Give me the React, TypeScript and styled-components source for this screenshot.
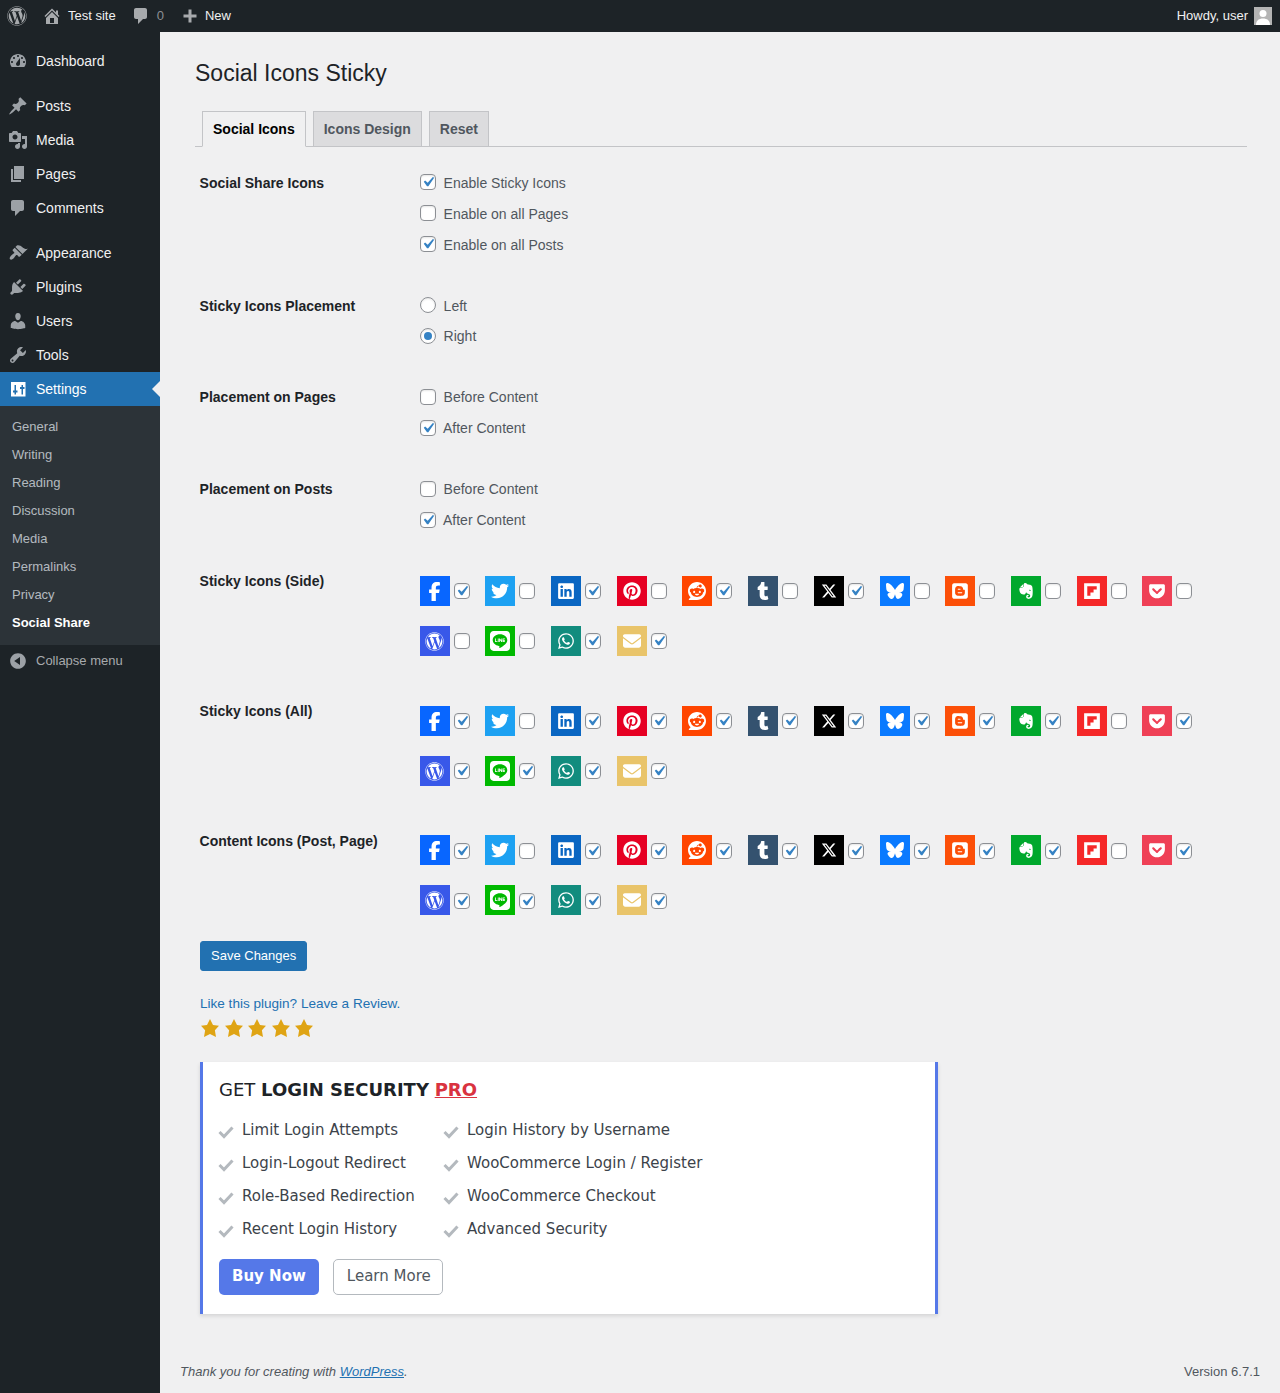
import React from "react";
import styled, { createGlobalStyle } from "styled-components";
import {
  FaBlogger,
  FaBluesky,
  FaEnvelope,
  FaEvernote,
  FaFacebookF,
  FaFlipboard,
  FaGetPocket,
  FaLine,
  FaLinkedin,
  FaPinterest,
  FaReddit,
  FaTumblr,
  FaTwitter,
  FaWhatsapp,
  FaWordpress,
  FaXTwitter,
} from "react-icons/fa6";

const GlobalStyle = createGlobalStyle`
  html, body {
    margin: 0;
    padding: 0;
    background: #f0f0f1;
    font-family: "Liberation Sans", Arial, sans-serif;
    font-size: 13px;
    color: #3c434a;
  }
`;

const Page = styled.div`
  display: flex;
  flex-direction: column;
  min-height: 100vh;
`;

/* admin bar */
const AdminBar = styled.header`
  display: flex;
  align-items: center;
  height: 32px;
  background: #1d2327;
  color: #f0f0f1;
`;
const BarItem = styled.div<{ $left: number; $gap?: number; $muted?: boolean }>`
  display: flex;
  align-items: center;
  gap: ${(p) => p.$gap ?? 8}px;
  margin-left: ${(p) => p.$left}px;
  color: ${(p) => (p.$muted ? "#8c8f94" : "#f0f0f1")};
  svg {
    color: #a7aaad;
  }
`;
const BarLabel = styled.span`
  margin-top: -2px;
`;
const BarRight = styled.div`
  display: flex;
  align-items: center;
  gap: 6px;
  margin-left: auto;
  margin-right: 8px;
`;
const Avatar = styled.svg`
  display: block;
  width: 18px;
  height: 18px;
`;

/* sidebar */
const Body = styled.div`
  display: flex;
  flex: 1;
`;
const Sidebar = styled.nav`
  width: 160px;
  flex-shrink: 0;
  background: #1d2327;
  padding-top: 12px;
`;
const MenuItem = styled.div<{ $active?: boolean; $gapAfter?: boolean }>`
  position: relative;
  display: flex;
  align-items: center;
  height: 34px;
  padding-left: 8px;
  gap: 8px;
  font-size: 14px;
  color: ${(p) => (p.$active ? "#fff" : "#f0f0f1")};
  background: ${(p) => (p.$active ? "#2271b1" : "transparent")};
  margin-bottom: ${(p) => (p.$gapAfter ? 11 : 0)}px;
  svg {
    color: ${(p) => (p.$active ? "#fff" : "#9ca1a6")};
  }
`;
const MenuArrow = styled.span`
  position: absolute;
  right: 0;
  top: 9px;
  border: 8px solid transparent;
  border-right-color: #f0f0f1;
  border-left-width: 0;
`;
const SubMenu = styled.div`
  background: #2c3338;
  padding: 6px 0 9px;
`;
const SubItem = styled.div<{ $current?: boolean }>`
  display: flex;
  align-items: center;
  height: 28px;
  padding-left: 12px;
  font-size: 13px;
  font-weight: ${(p) => (p.$current ? 700 : 400)};
  color: ${(p) => (p.$current ? "#fff" : "rgba(240, 246, 252, 0.7)")};
`;
const Collapse = styled.div`
  display: flex;
  align-items: center;
  gap: 8px;
  height: 32px;
  padding-left: 8px;
  font-size: 13px;
  color: #a7aaad;
  span {
    margin-top: -2px;
  }
  svg {
    color: #9ca1a6;
  }
`;

/* main column */
const Main = styled.main`
  flex: 1;
  display: flex;
  flex-direction: column;
`;
const Wrap = styled.div`
  padding: 27px 33px 0 35px;
`;
const Title = styled.h1`
  margin: 0 0 23px;
  font-size: 23px;
  font-weight: 400;
  line-height: 29px;
  color: #1d2327;
`;
const Tabs = styled.div`
  display: flex;
  gap: 7px;
  padding-left: 7px;
  border-bottom: 1px solid #c3c4c7;
`;
const Tab = styled.div<{ $active?: boolean }>`
  display: flex;
  align-items: center;
  height: 34px;
  padding: 0 10px;
  border: 1px solid #c3c4c7;
  border-bottom: ${(p) => (p.$active ? "1px solid #f0f0f1" : "none")};
  margin-bottom: ${(p) => (p.$active ? "-1px" : "0")};
  background: ${(p) => (p.$active ? "#f0f0f1" : "#dcdcde")};
  color: ${(p) => (p.$active ? "#000" : "#50575e")};
  font-size: 14px;
  font-weight: 700;
`;
const Form = styled.form`
  padding: 20px 0 0 5px;
  margin: 0;
`;
const Section = styled.section<{ $top?: number }>`
  display: grid;
  grid-template-columns: 220px 1fr;
  margin-top: ${(p) => p.$top ?? 0}px;
`;
const SectionLabel = styled.div<{ $offset: number }>`
  font-size: 14px;
  font-weight: 700;
  line-height: 20px;
  color: #1d2327;
  margin-top: ${(p) => p.$offset}px;
  margin-left: -0.4px;
`;
const Options = styled.div`
  display: flex;
  flex-direction: column;
  gap: 1px;
`;
const OptionRow = styled.label<{ $tight?: boolean }>`
  display: flex;
  align-items: center;
  gap: ${(p) => (p.$tight ? 7 : 7.6)}px;
  height: 30px;
  font-size: 14px;
  color: #50575e;
`;
const OptionText = styled.span<{ $nudge?: boolean }>`
  margin-top: ${(p) => (p.$nudge ? 2 : 0)}px;
`;
const Box = styled.span`
  display: block;
  box-sizing: border-box;
  width: 16px;
  height: 16px;
  flex-shrink: 0;
  background: #fff;
  border: 1px solid #8c8f94;
  border-radius: 4px;
  box-shadow: inset 0 1px 2px rgba(0, 0, 0, 0.1);
  svg {
    display: block;
    width: 20px;
    height: 20px;
    margin: -3px 0 0 -3px;
    color: #3582c4;
  }
`;
const Radio = styled.span<{ $on?: boolean }>`
  display: flex;
  align-items: center;
  justify-content: center;
  box-sizing: border-box;
  width: 16px;
  height: 16px;
  flex-shrink: 0;
  background: #fff;
  border: 1px solid #8c8f94;
  border-radius: 50%;
  box-shadow: inset 0 1px 2px rgba(0, 0, 0, 0.1);
  &::before {
    content: "";
    display: ${(p) => (p.$on ? "block" : "none")};
    width: 8px;
    height: 8px;
    border-radius: 50%;
    background: #3582c4;
  }
`;
const IconGrid = styled.div<{ $lowChecks?: boolean }>`
  display: grid;
  grid-template-columns: repeat(12, 65.72px);
  row-gap: 20px;
  margin-left: -0.45px;
  ${Box} {
    margin-top: ${(p) => (p.$lowChecks ? 2 : 0)}px;
  }
`;
const IconCell = styled.div`
  display: flex;
  align-items: center;
  gap: 4px;
`;
const Tile = styled.span<{ $bg: string }>`
  display: flex;
  align-items: center;
  justify-content: center;
  width: 30px;
  height: 30px;
  color: #fff;
  background: ${(p) => p.$bg};
`;
const SaveButton = styled.button`
  display: block;
  height: 30px;
  margin-top: 26px;
  padding: 0 10px 2px;
  border: 1px solid #2271b1;
  border-radius: 3px;
  background: #2271b1;
  color: #fff;
  font-family: inherit;
  font-size: 13px;
`;
const ReviewLink = styled.a`
  display: block;
  margin-top: 23px;
  font-size: 13.56px;
  line-height: 20px;
  color: #2271b1;
  text-decoration: none;
`;
const Stars = styled.div`
  display: flex;
  gap: 3.6px;
  margin-top: 4px;
  color: #dfa414;
  svg {
    display: block;
    width: 20px;
    height: 20px;
  }
`;

/* upsell card */
const Card = styled.div`
  box-sizing: border-box;
  width: 738px;
  height: 252px;
  margin-top: 24px;
  padding: 16px 16px 0;
  background: #fff;
  border-left: 3px solid #5578e8;
  border-right: 3px solid #5578e8;
  box-shadow: 0 2px 4px rgba(0, 0, 0, 0.12);
  font-family: "DejaVu Sans", sans-serif;
`;
const CardTitle = styled.h3`
  margin: 0 0 11px;
  font-size: 18px;
  font-weight: 400;
  line-height: 24px;
  color: #1d2327;
  b {
    font-weight: 700;
  }
  u {
    font-weight: 700;
    color: #d9333f;
  }
`;
const FeatureGrid = styled.div`
  display: grid;
  grid-template-columns: 225px 1fr;
  grid-auto-rows: 33px;
`;
const Feature = styled.div`
  display: flex;
  align-items: center;
  gap: 8px;
  margin-left: -1px;
  font-size: 15px;
  color: #3c434a;
  svg {
    width: 16px;
    height: 14px;
    margin-top: 5px;
    flex-shrink: 0;
  }
`;
const CardActions = styled.div`
  display: flex;
  gap: 14px;
  margin-top: 14px;
`;
const BuyButton = styled.a`
  display: flex;
  align-items: center;
  box-sizing: border-box;
  height: 36px;
  padding: 0 13px 2px;
  border-radius: 5px;
  background: #5578e8;
  color: #fff;
  font-size: 15px;
  font-weight: 700;
`;
const LearnButton = styled.a`
  display: flex;
  align-items: center;
  box-sizing: border-box;
  height: 36px;
  padding: 0 11px 2px 13px;
  border: 1px solid #b4b9be;
  border-radius: 5px;
  background: #fff;
  color: #50575e;
  font-size: 15px;
`;

const Footer = styled.footer`
  display: flex;
  justify-content: space-between;
  margin-top: auto;
  padding: 0 20px 11px;
  line-height: 20px;
  font-size: 13px;
  color: #50575e;
  a {
    color: #2271b1;
  }
`;

const paths: Record<string, string> = {
  dashboard:
    "M3.76 16h12.48c1.1-1.37 1.76-3.11 1.76-5 0-4.42-3.58-8-8-8s-8 3.58-8 8c0 1.89.66 3.63 1.76 5zM10 4c.55 0 1 .45 1 1s-.45 1-1 1-1-.45-1-1 .45-1 1-1zM6 6c.55 0 1 .45 1 1s-.45 1-1 1-1-.45-1-1 .45-1 1-1zm8 0c.55 0 1 .45 1 1s-.45 1-1 1-1-.45-1-1 .45-1 1-1zm-5.37 5.55L12 7v6c0 1.1-.9 2-2 2s-2-.9-2-2c0-.57.24-1.08.63-1.45zM4 10c.55 0 1 .45 1 1s-.45 1-1 1-1-.45-1-1 .45-1 1-1zm12 0c.55 0 1 .45 1 1s-.45 1-1 1-1-.45-1-1 .45-1 1-1z",
  post: "M10.44 3.02l1.82-1.82 6.36 6.35-1.83 1.82c-1.05-.68-2.48-.57-3.41.36l-.75.75c-.92.93-1.04 2.35-.35 3.41l-1.83 1.82-2.41-2.41-2.8 2.79c-.42.42-3.38 2.71-3.8 2.29s1.86-3.39 2.28-3.81l2.79-2.79L4.1 9.36l1.83-1.82c1.05.69 2.48.57 3.4-.36l.75-.75c.93-.92 1.05-2.35.36-3.41z",
  media:
    "M13 11V4c0-.55-.45-1-1-1h-1.67L9 1H5L3.67 3H2c-.55 0-1 .45-1 1v7c0 .55.45 1 1 1h10c.55 0 1-.45 1-1zM7 4.5c1.38 0 2.5 1.12 2.5 2.5S8.38 9.5 7 9.5 4.5 8.38 4.5 7 5.62 4.5 7 4.5zM14 6h5v10.5c0 1.38-1.12 2.5-2.5 2.5S14 17.88 14 16.5s1.12-2.5 2.5-2.5c.17 0 .34.02.5.05V9h-3V6zm-4 8.05V13h2v3.5c0 1.38-1.12 2.5-2.5 2.5S7 17.88 7 16.5 8.12 14 9.5 14c.17 0 .34.02.5.05z",
  page: "M6 15V2h10v13H6zm-1 1h8v2H3V5h2v11z",
  comment:
    "M5 2h9c1.1 0 2 .9 2 2v7c0 1.1-.9 2-2 2h-2l-5 5v-5H5c-1.1 0-2-.9-2-2V4c0-1.1.9-2 2-2z",
  appearance:
    "M14.48 11.06L7.41 3.99l1.5-1.5c.5-.56 2.3-.47 3.51.32 1.21.8 1.43 1.28 2.91 2.1 1.18.64 2.45 1.26 4.45.85zm-.71.71L6.7 4.7 4.93 6.47c-.39.39-.39 1.02 0 1.41l1.06 1.06c.39.39.39 1.03 0 1.42-.6.6-1.43 1.11-2.21 1.69-.35.26-.7.53-1.01.84-1.3 1.3-1.3 2.8-.7 3.4s2.1.6 3.4-.7c.3-.3.58-.66.84-1.01.58-.78 1.09-1.61 1.69-2.21.39-.39 1.03-.39 1.42 0l1.06 1.06c.39.39 1.02.39 1.41 0z",
  plugin:
    "M13.11 4.36L9.87 7.6 8 5.73l3.24-3.24c.35-.34 1.05-.2 1.56.32.52.51.66 1.21.31 1.55zm-8 1.77l.91-1.12 9.01 9.01-1.19.84c-.71.71-2.63 1.16-3.82 1.16H6.14L4.9 17.26c-.59.59-1.54.59-2.12 0-.59-.58-.59-1.53 0-2.12l1.24-1.24v-3.88c0-1.13.4-3.19 1.09-3.89zm7.26 3.97l3.24-3.24c.34-.35 1.04-.21 1.55.31.52.51.66 1.21.31 1.55l-3.24 3.25z",
  users:
    "M10 9.25c-2.27 0-2.73-3.44-2.73-3.44C7 4.02 7.82 2 9.97 2c2.16 0 2.98 2.02 2.71 3.81 0 0-.41 3.44-2.68 3.44zm0 2.57L12.72 10c2.39 0 4.52 2.33 4.52 4.53v2.49s-3.65 1.13-7.24 1.13c-3.65 0-7.24-1.13-7.24-1.13v-2.49c0-2.25 1.94-4.48 4.47-4.48z",
  tools:
    "M16.68 9.77c-1.34 1.34-3.3 1.67-4.95.99l-5.41 6.52c-.99.99-2.59.99-3.58 0s-.99-2.59 0-3.57l6.52-5.42c-.68-1.65-.35-3.61.99-4.95 1.28-1.28 3.12-1.62 4.72-1.06l-2.89 2.89 2.82 2.82 2.86-2.87c.53 1.58.18 3.39-1.08 4.65zM3.81 16.21c.4.39 1.04.39 1.43 0 .4-.4.4-1.04 0-1.43-.39-.4-1.03-.4-1.43 0-.39.39-.39 1.03 0 1.43z",
  settings:
    "M3 3h14.500v14.500H3zM6.500 6h1.500v5.500h1.500v2H8v2H6.500v-2H5v-2h1.500zM13.500 6H15v2h1.500v2H15v5.500h-1.500V10H12V8h1.500z",
  home: "M16 8.5l1.53 1.53-1.06 1.06L10 4.62l-6.47 6.47-1.06-1.06L10 2.5l4 4v-2h2v4zm-6-2.46l6 5.99V18H4v-5.97zM12 17v-5H8v5h4z",
  plus: "M16.5 8.500v3h-5v5h-3v-5h-5v-3h5v-5h3v5z",
  collapse:
    "M10 2.16c4.33 0 7.84 3.51 7.84 7.84s-3.51 7.84-7.84 7.84S2.16 14.33 2.16 10 5.67 2.16 10 2.16zm2 11.72V6.12L6.18 9.9z",
  star: "M10 1l3 6 6 .75-4.12 4.62L16 19l-6-3-6 3 1.13-6.63L1 7.75 7 7z",
  tick: "M14.83 4.89l1.34.94-5.81 8.38H9.02L5.78 9.67l1.34-1.25 2.57 2.4z",
};

function Dashicon({ name, size = 20 }: { name: string; size?: number }) {
  return (
    <svg width={size} height={size} viewBox="0 0 20 20" fill="currentColor" fillRule="evenodd" style={{ display: "block", flexShrink: 0 }}>
      <path d={paths[name]} />
    </svg>
  );
}

function Check({ on }: { on?: boolean }) {
  return (
    <Box>
      {on && (
        <svg viewBox="0 0 20 20" fill="currentColor">
          <path d={paths.tick} />
        </svg>
      )}
    </Box>
  );
}

const menuTop = [
  { icon: "dashboard", label: "Dashboard", gap: true },
  { icon: "post", label: "Posts" },
  { icon: "media", label: "Media" },
  { icon: "page", label: "Pages" },
  { icon: "comment", label: "Comments", gap: true },
  { icon: "appearance", label: "Appearance" },
  { icon: "plugin", label: "Plugins" },
  { icon: "users", label: "Users" },
  { icon: "tools", label: "Tools" },
];

const subMenu = ["General", "Writing", "Reading", "Discussion", "Media", "Permalinks", "Privacy"];

const networks: { bg: string; icon: React.ReactNode }[] = [
  { bg: "#0866ff", icon: <FaFacebookF size={19} /> },
  { bg: "#1da1f2", icon: <FaTwitter size={18} /> },
  { bg: "#0a66c2", icon: <FaLinkedin size={18} /> },
  { bg: "#e60023", icon: <FaPinterest size={18} /> },
  { bg: "#ff4500", icon: <FaReddit size={18} /> },
  { bg: "#34526f", icon: <FaTumblr size={18} /> },
  { bg: "#000000", icon: <FaXTwitter size={16} /> },
  { bg: "#0a7aff", icon: <FaBluesky size={18} /> },
  { bg: "#fc4f08", icon: <FaBlogger size={18} /> },
  { bg: "#00a82d", icon: <FaEvernote size={18} /> },
  { bg: "#f52828", icon: <FaFlipboard size={18} /> },
  { bg: "#ef4056", icon: <FaGetPocket size={18} /> },
  { bg: "#3858e9", icon: <FaWordpress size={19} /> },
  { bg: "#00b900", icon: <FaLine size={20} /> },
  { bg: "#128c7e", icon: <FaWhatsapp size={18} /> },
  { bg: "#e9c46a", icon: <FaEnvelope size={18} /> },
];

const sideOn = [1, 0, 1, 0, 1, 0, 1, 0, 0, 0, 0, 0, 0, 0, 1, 1];
const allOn = [1, 0, 1, 1, 1, 1, 1, 1, 1, 1, 0, 1, 1, 1, 1, 1];

const featuresRows = [
  ["Limit Login Attempts", "Login History by Username"],
  ["Login-Logout Redirect", "WooCommerce Login / Register"],
  ["Role-Based Redirection", "WooCommerce Checkout"],
  ["Recent Login History", "Advanced Security"],
];

function NetworkGrid({ on, lowChecks }: { on: number[]; lowChecks?: boolean }) {
  return (
    <IconGrid $lowChecks={lowChecks}>
      {networks.map((n, i) => (
        <IconCell key={i}>
          <Tile $bg={n.bg}>{n.icon}</Tile>
          <Check on={!!on[i]} />
        </IconCell>
      ))}
    </IconGrid>
  );
}

export default function App() {
  return (
    <Page>
      <GlobalStyle />
      <AdminBar>
        <BarItem $left={7}>
          <FaWordpress size={20} color="#a7aaad" />
        </BarItem>
        <BarItem $left={15} $gap={6}>
          <Dashicon name="home" />
          <BarLabel>Test site</BarLabel>
        </BarItem>
        <BarItem $left={15} $gap={6} $muted>
          <Dashicon name="comment" />
          <BarLabel>0</BarLabel>
        </BarItem>
        <BarItem $left={16} $gap={5}>
          <Dashicon name="plus" />
          <BarLabel>New</BarLabel>
        </BarItem>
        <BarRight>
          <BarLabel>Howdy, user</BarLabel>
          <Avatar viewBox="0 0 18 18">
            <rect width="18" height="18" fill="#b4b4b4" />
            <circle cx="9" cy="6.500" r="3.500" fill="#fff" />
            <path d="M2 18c0-4.500 3-6.500 7-6.500s7 2 7 6.500z" fill="#fff" />
          </Avatar>
        </BarRight>
      </AdminBar>
      <Body>
        <Sidebar>
          {menuTop.map((m) => (
            <MenuItem key={m.label} $gapAfter={m.gap}>
              <Dashicon name={m.icon} />
              {m.label}
            </MenuItem>
          ))}
          <MenuItem $active>
            <Dashicon name="settings" />
            Settings
            <MenuArrow />
          </MenuItem>
          <SubMenu>
            {subMenu.map((s) => (
              <SubItem key={s}>{s}</SubItem>
            ))}
            <SubItem $current>Social Share</SubItem>
          </SubMenu>
          <Collapse>
            <Dashicon name="collapse" />
            <span>Collapse menu</span>
          </Collapse>
        </Sidebar>
        <Main>
          <Wrap>
            <Title>Social Icons Sticky</Title>
            <Tabs>
              <Tab $active>Social Icons</Tab>
              <Tab>Icons Design</Tab>
              <Tab>Reset</Tab>
            </Tabs>
            <Form>
              <Section>
                <SectionLabel $offset={6}>Social Share Icons</SectionLabel>
                <Options>
                  <OptionRow><Check on /><OptionText $nudge>Enable Sticky Icons</OptionText></OptionRow>
                  <OptionRow><Check /><OptionText $nudge>Enable on all Pages</OptionText></OptionRow>
                  <OptionRow><Check on /><OptionText $nudge>Enable on all Posts</OptionText></OptionRow>
                </Options>
              </Section>
              <Section $top={31}>
                <SectionLabel $offset={6}>Sticky Icons Placement</SectionLabel>
                <Options>
                  <OptionRow><Radio /><OptionText $nudge>Left</OptionText></OptionRow>
                  <OptionRow><Radio $on /><OptionText>Right</OptionText></OptionRow>
                </Options>
              </Section>
              <Section $top={31}>
                <SectionLabel $offset={5}>Placement on Pages</SectionLabel>
                <Options>
                  <OptionRow><Check /><OptionText>Before Content</OptionText></OptionRow>
                  <OptionRow $tight><Check on /><OptionText>After Content</OptionText></OptionRow>
                </Options>
              </Section>
              <Section $top={31}>
                <SectionLabel $offset={5}>Placement on Posts</SectionLabel>
                <Options>
                  <OptionRow><Check /><OptionText>Before Content</OptionText></OptionRow>
                  <OptionRow $tight><Check on /><OptionText>After Content</OptionText></OptionRow>
                </Options>
              </Section>
              <Section $top={41}>
                <SectionLabel $offset={-5}>Sticky Icons (Side)</SectionLabel>
                <NetworkGrid on={sideOn} />
              </Section>
              <Section $top={50}>
                <SectionLabel $offset={-5}>Sticky Icons (All)</SectionLabel>
                <NetworkGrid on={allOn} />
              </Section>
              <Section $top={49}>
                <SectionLabel $offset={-4}>Content Icons (Post, Page)</SectionLabel>
                <NetworkGrid on={allOn} lowChecks />
              </Section>
              <SaveButton type="button">Save Changes</SaveButton>
              <ReviewLink href="#">Like this plugin? Leave a Review.</ReviewLink>
              <Stars>
                {[0, 1, 2, 3, 4].map((i) => (
                  <Dashicon key={i} name="star" />
                ))}
              </Stars>
              <Card>
                <CardTitle>
                  GET <b>LOGIN SECURITY</b> <u>PRO</u>
                </CardTitle>
                <FeatureGrid>
                  {featuresRows.flat().map((f) => (
                    <Feature key={f}>
                      <svg viewBox="0 0 16 14" fill="none" stroke="#b4b9be" strokeWidth="3">
                        <path d="M1.500 7L6 11.500L14.500 2.500" />
                      </svg>
                      {f}
                    </Feature>
                  ))}
                </FeatureGrid>
                <CardActions>
                  <BuyButton>Buy Now</BuyButton>
                  <LearnButton>Learn More</LearnButton>
                </CardActions>
              </Card>
            </Form>
          </Wrap>
          <Footer>
            <i>
              Thank you for creating with <a href="#">WordPress</a>.
            </i>
            <span>Version 6.7.1</span>
          </Footer>
        </Main>
      </Body>
    </Page>
  );
}
